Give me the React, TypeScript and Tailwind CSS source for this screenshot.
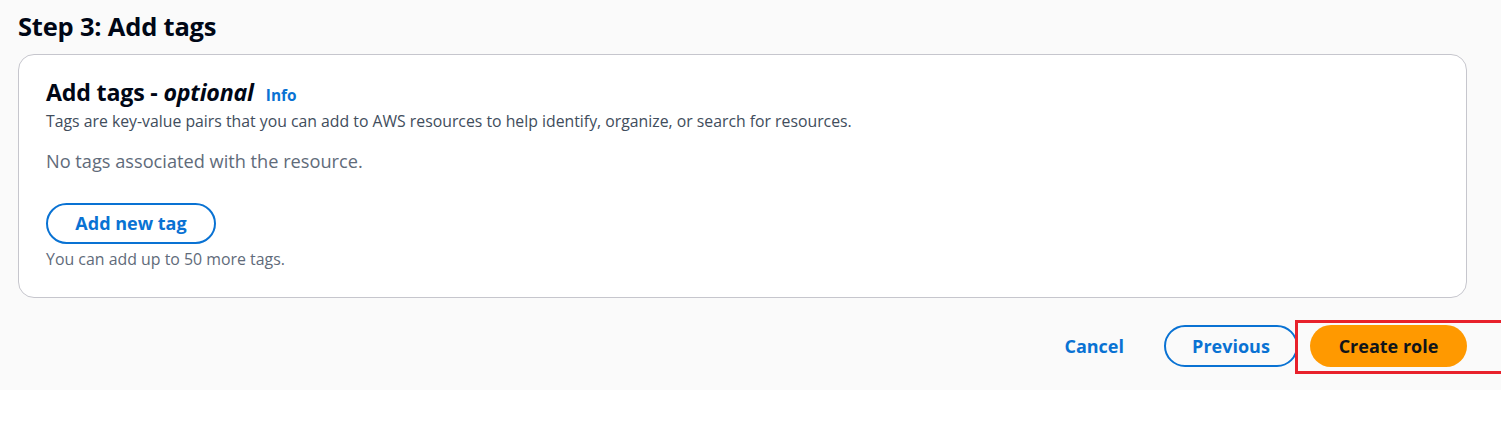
import React from 'react';

const font = { fontFamily: '"Open Sans", "Noto Sans", sans-serif' };

const App = () => {
  return (
    <div className="w-[1501px] h-[447px] bg-white" style={font}>
      <div className="bg-[#fafafa] h-[390px] px-[18px] pt-[9px]">
        <h1 className="text-[25.5px] leading-[34px] font-bold text-[#000716] tracking-[-0.2px]">
          Step 3: Add tags
        </h1>

        {/* Tags card */}
        <div className="mt-[11px] w-[1449px] h-[244px] bg-white border border-[#c6c6cd] rounded-[16px] px-[27px] pt-[22px]">
          <div className="flex items-baseline gap-[12px]">
            <h2 className="text-[23.2px] leading-[30px] font-bold text-[#000716] tracking-[-0.2px]">
              Add tags - <span className="italic">optional</span>
            </h2>
            <a className="text-[15.4px] font-bold text-[#0972d3]">Info</a>
          </div>
          <p className="mt-[4px] text-[15.8px] leading-[20px] text-[#414d5c]">
            Tags are key-value pairs that you can add to AWS resources to help identify, organize, or search for resources.
          </p>
          <p className="mt-[18px] text-[18.2px] leading-[24px] text-[#5f6b7a]">
            No tags associated with the resource.
          </p>
          <button className="mt-[30px] h-[41px] w-[170px] rounded-full border-2 border-[#0972d3] text-[#0972d3] text-[18px] font-bold">
            Add new tag
          </button>
          <p className="mt-[5px] text-[15.9px] leading-[20px] text-[#5f6b7a]">
            You can add up to 50 more tags.
          </p>
        </div>

        {/* Footer actions */}
        <div className="mt-[27px] w-[1449px] flex justify-end items-center">
          <button className="text-[#0972d3] text-[18px] font-bold mr-[40px]">Cancel</button>
          <button className="h-[42px] w-[134px] rounded-full border-2 border-[#0972d3] text-[#0972d3] text-[18px] font-bold mr-[12px]">
            Previous
          </button>
          <div className="relative">
            <button className="h-[42px] w-[157px] rounded-full bg-[#ff9900] text-[#0f141a] text-[18px] font-bold">
              Create role
            </button>
            <div className="absolute -left-[15px] -top-[5px] w-[220px] h-[54px] border-[3px] border-[#e8212b]" />
          </div>
        </div>
      </div>
    </div>
  );
};

export default App;
